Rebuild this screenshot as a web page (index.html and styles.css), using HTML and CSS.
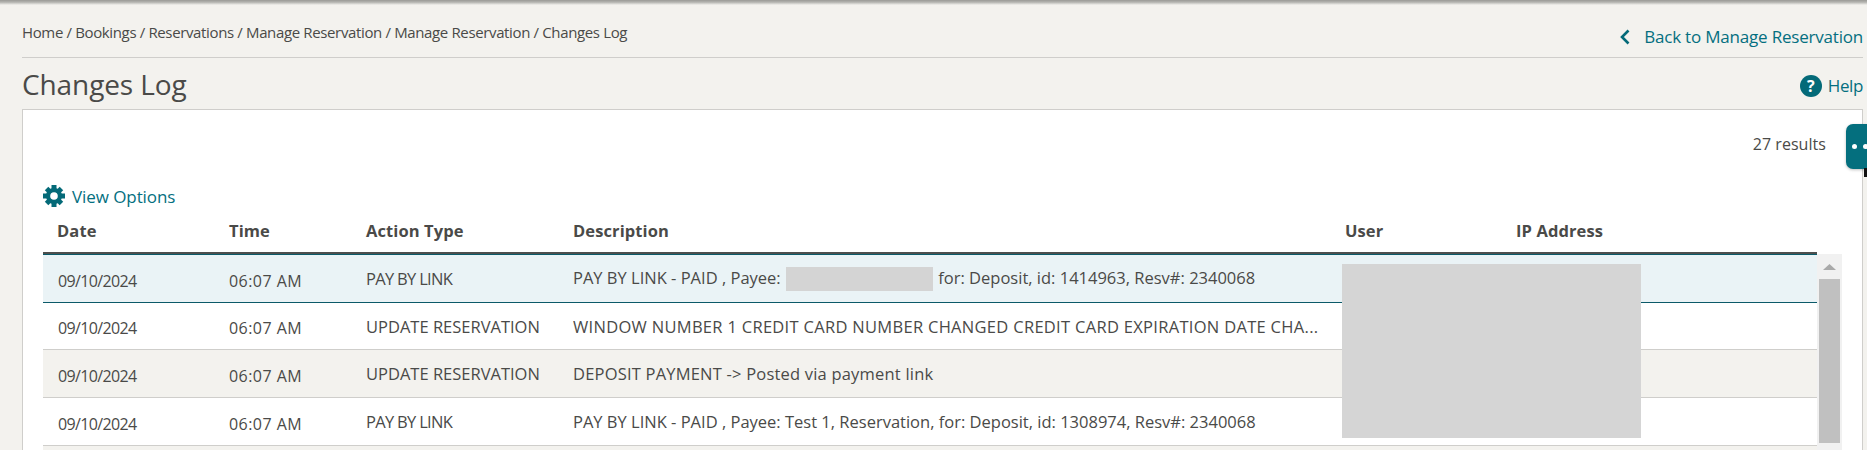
FILE: index.html
```html
<!DOCTYPE html>
<html lang="en">
<head>
<meta charset="utf-8">
<title>Changes Log</title>
<link rel="stylesheet" href="styles.css">
</head>
<body>
<div class="top-shadow"></div>
<div class="page">
  <div class="crumb-row">
    <div class="crumbs">Home / Bookings / Reservations / Manage Reservation / Manage Reservation / Changes Log</div>
    <a class="back" href="#">
      <svg class="chevron" width="12" height="18" viewBox="0 0 12 18"><path d="M9.500 2.500 3 9l6.500 6.500" fill="none" stroke="#046a78" stroke-width="2.600"/></svg>
      <span>Back to Manage Reservation</span>
    </a>
  </div>
  <div class="title-row">
    <h1 class="title">Changes Log</h1>
    <a class="help" href="#"><span class="help-icon">?</span><span>Help</span></a>
  </div>
  <div class="panel">
    <div class="results">27 results</div>
    <a class="view-options" href="#">
      <svg class="gear" width="22" height="22" viewBox="0 0 22 22">
        <g fill="#046a78">
          <rect x="8.500" y="0" width="5" height="22"/>
          <rect x="8.500" y="0.500" width="5" height="21" transform="rotate(45 11 11)"/>
          <rect x="8.500" y="0" width="5" height="22" transform="rotate(90 11 11)"/>
          <rect x="8.500" y="0.500" width="5" height="21" transform="rotate(135 11 11)"/>
          <circle cx="11" cy="11" r="8"/>
        </g>
        <circle cx="11" cy="11" r="3.800" fill="#fff"/>
      </svg>
      <span>View Options</span>
    </a>
    <div class="table-wrap">
      <table class="log">
        <colgroup>
          <col class="c-date"><col class="c-time"><col class="c-action"><col class="c-desc"><col class="c-user"><col class="c-ip">
        </colgroup>
        <thead>
          <tr><th>Date</th><th>Time</th><th>Action Type</th><th>Description</th><th>User</th><th>IP Address</th></tr>
        </thead>
        <tbody>
          <tr class="selected">
            <td class="date">09/10/2024</td><td class="time">06:07 AM</td><td class="pay">PAY BY LINK</td>
            <td><div class="clip">PAY BY LINK - PAID , Payee: <span class="redact-inline"></span> for: Deposit, id: 1414963, Resv#: 2340068</div></td><td></td><td></td>
          </tr>
          <tr class="r2">
            <td class="date">09/10/2024</td><td class="time">06:07 AM</td><td>UPDATE RESERVATION</td>
            <td><div class="clip caps">WINDOW NUMBER 1 CREDIT CARD NUMBER CHANGED CREDIT CARD EXPIRATION DATE CHA...</div></td><td></td><td></td>
          </tr>
          <tr class="alt">
            <td class="date">09/10/2024</td><td class="time">06:07 AM</td><td>UPDATE RESERVATION</td>
            <td><div class="clip mixed">DEPOSIT PAYMENT -&gt; Posted via payment link</div></td><td></td><td></td>
          </tr>
          <tr>
            <td class="date">09/10/2024</td><td class="time">06:07 AM</td><td class="pay">PAY BY LINK</td>
            <td><div class="clip">PAY BY LINK - PAID , Payee: Test 1, Reservation, for: Deposit, id: 1308974, Resv#: 2340068</div></td><td></td><td></td>
          </tr>
          <tr class="alt"><td colspan="6"></td></tr>
        </tbody>
      </table>
      <div class="scrollbar">
        <div class="scroll-up"><svg width="13" height="6" viewBox="0 0 13 6"><path d="M6.500 0 13 6H0z" fill="#a9a9a9"/></svg></div>
        <div class="scroll-thumb"></div>
      </div>
      <div class="redact-block"></div>
    </div>
  </div>
</div>
<div class="side-tab"><span class="dot"></span><span class="dot"></span></div>
<div class="cursor-bit"></div>
</body>
</html>
```

FILE: styles.css
```css
* { box-sizing: border-box; }
html, body { margin: 0; height: 450px; overflow: hidden; }
body {
  background: #f3f2ee;
  color: #4a4a48;
  font-family: "Open Sans", "Liberation Sans", sans-serif;
  position: relative;
}
a { color: #046f80; text-decoration: none; }
.top-shadow {
  height: 5px;
  background: linear-gradient(#9a9a96 0, #b5b5b1 45%, #f3f2ee 100%);
}
.page { padding: 0 4px 0 22px; }

.crumb-row {
  height: 53px;
  display: flex;
  justify-content: space-between;
  align-items: center;
  border-bottom: 1px solid #cfcecb;
}
.crumbs { font-size: 15px; letter-spacing: -0.36px; margin-top: 2px; }
.back { display: flex; align-items: center; gap: 13px; font-size: 17px; letter-spacing: -0.2px; margin-top: 11px; }
.chevron { display: block; }

.title-row {
  height: 51px;
  display: flex;
  justify-content: space-between;
  align-items: center;
}
.title { margin: 0; font-size: 28px; font-weight: 400; letter-spacing: -0.1px; color: #4a4a48; }
.help { display: flex; align-items: center; gap: 6px; font-size: 17px; letter-spacing: -0.4px; margin-top: 4px; }
.help-icon {
  width: 22px; height: 22px; border-radius: 50%;
  background: #046a78; color: #fff;
  display: flex; align-items: center; justify-content: center;
  font-weight: 700; font-size: 16px; letter-spacing: 0;
}

.panel {
  width: 1841px;
  height: 341px;
  overflow: hidden;
  background: #fff;
  border: 1px solid #cfcecb;
  border-bottom: 0;
  padding-left: 20px;
}
.results { text-align: right; font-size: 16px; letter-spacing: 0.05px; padding-right: 36px; padding-top: 23px; line-height: 22px; }
.view-options { display: flex; align-items: center; gap: 7px; margin-top: 30px; height: 22px; font-size: 17px; letter-spacing: -0.08px; }
.gear { display: block; flex: none; }

.table-wrap { position: relative; display: flex; align-items: flex-start; margin-top: 3px; }
.log { border-collapse: separate; border-spacing: 0; table-layout: fixed; width: 1774px; flex: none; font-size: 16.500px; }
.c-date { width: 172px; }
.c-time { width: 137px; }
.c-action { width: 207px; }
.c-desc { width: 772px; }
.c-user { width: 171px; }
.c-ip { width: 315px; }
th {
  height: 45px;
  text-align: left;
  font-weight: 700;
  padding: 0 0 3px 14px;
  border-bottom: 1px solid #0b5a69;
  box-shadow: inset 0 -2px 0 #4d4f4e;
  letter-spacing: 0.1px;
}
td { height: 48px; padding: 1px 0 1px 14px; border-bottom: 1px solid #cfcecb; white-space: nowrap; }
td.date { font-size: 16px; letter-spacing: -0.65px; padding: 4px 0 0 15px; }
td.time { font-size: 16px; letter-spacing: 0.45px; padding: 4px 0 0 14px; }
td.pay { letter-spacing: -0.7px; }
.clip { overflow: hidden; }
.caps { letter-spacing: 0.3px; }
.mixed { letter-spacing: 0.2px; }
.selected td { background: #eaf3f6; border-bottom-color: #0b5a69; }
.r2 td { height: 47px; }
.alt td { background: #f3f2ee; }
.redact-inline { display: inline-block; width: 147px; height: 24px; background: #d4d4d4; vertical-align: middle; margin: 0 1px; }

.scrollbar { width: 25px; height: 200px; margin-top: 44px; background: #f1f1f1; padding: 0 2px; flex: none; }
.scroll-up { height: 25px; display: flex; align-items: center; justify-content: center; }
.scroll-up svg { display: block; }
.scroll-thumb { width: 21px; height: 164px; background: #c0c0c0; }
.redact-block { position: absolute; left: 1299px; top: 54px; width: 299px; height: 174px; background: #d5d5d5; }

.side-tab {
  position: absolute; left: 1846px; top: 124px; width: 21px; height: 45px;
  background: #046f7e; border-radius: 7px 0 0 7px;
  display: flex; align-items: center; gap: 6px; padding-left: 6px;
  box-shadow: 0 1px 3px rgba(0,0,0,.25);
}
.dot { width: 5px; height: 5px; border-radius: 50%; background: #fff; flex: none; }
.cursor-bit { position: absolute; left: 1864px; top: 168px; width: 3px; height: 9px; background: #111; }
```
